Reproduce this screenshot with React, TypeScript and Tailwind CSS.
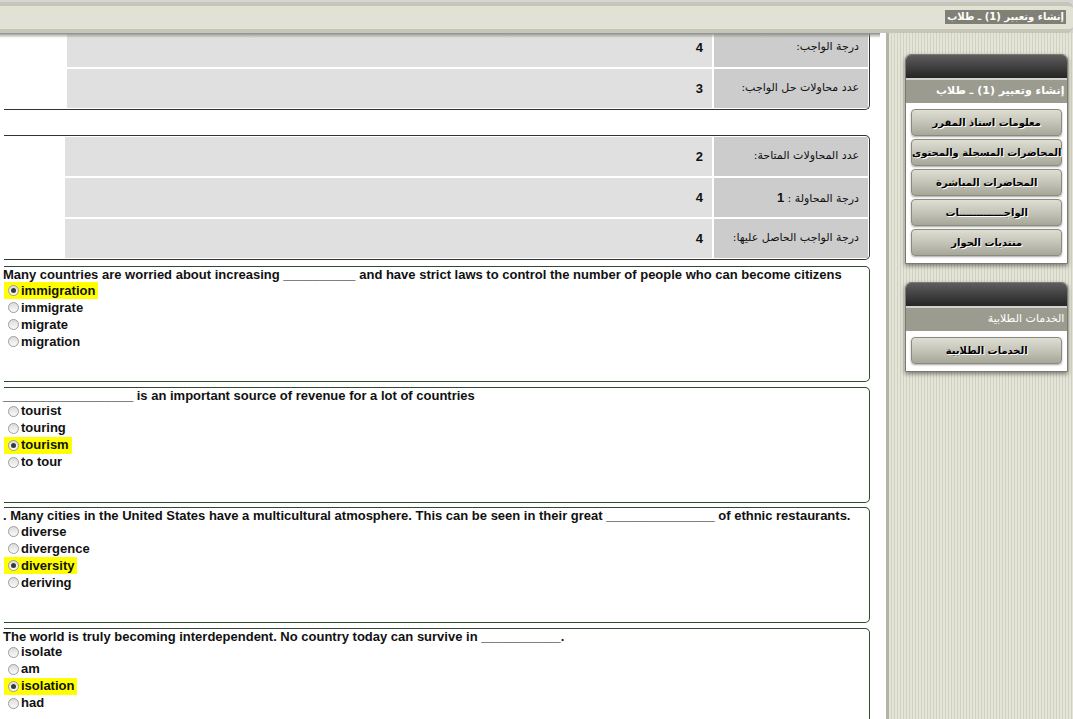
import React from "react";

type Option = { text: string; checked?: boolean };
type Question = { text: string; options: Option[] };

const QUESTIONS: Question[] = [
  {
    text: "Many countries are worried about increasing __________ and have strict laws to control the number of people who can become citizens",
    options: [{ text: "immigration", checked: true }, { text: "immigrate" }, { text: "migrate" }, { text: "migration" }],
  },
  {
    text: "__________________ is an important source of revenue for a lot of countries",
    options: [{ text: "tourist" }, { text: "touring" }, { text: "tourism", checked: true }, { text: "to tour" }],
  },
  {
    text: ". Many cities in the United States have a multicultural atmosphere. This can be seen in their great _______________ of ethnic restaurants.",
    options: [{ text: "diverse" }, { text: "divergence" }, { text: "diversity", checked: true }, { text: "deriving" }],
  },
  {
    text: "The world is truly becoming interdependent. No country today can survive in ___________.",
    options: [{ text: "isolate" }, { text: "am" }, { text: "isolation", checked: true }, { text: "had" }],
  },
];

const AR = "font-['DejaVu_Sans','Noto_Sans',sans-serif]";

// صف في جدول المعلومات
function InfoRow({ label, value, white = 59 }: { label: React.ReactNode; value: string; white?: number }) {
  return (
    <div className="flex h-[39px] gap-[2px]">
      <div className="bg-white" style={{ width: white }} />
      <div className="flex flex-1 items-center justify-end bg-[#e0e0e0] pr-[9px] text-[13px] font-bold text-[#111]">{value}</div>
      <div dir="rtl" className={`flex w-[154px] items-center bg-[#cccccc] pr-[9px] text-[11px] text-[#111] ${AR}`}>
        {label}
      </div>
    </div>
  );
}

function Radio({ checked }: { checked?: boolean }) {
  return (
    <span className="flex h-[11px] w-[11px] items-center justify-center rounded-full border border-[#9c9c9c] bg-gradient-to-b from-[#dcdcdc] to-[#fafafa]">
      {checked && <span className="h-[5px] w-[5px] rounded-full bg-[#3a3a3a]" />}
    </span>
  );
}

function QuestionBox({ q, first }: { q: Question; first?: boolean }) {
  return (
    <div className={`${first ? "mt-[6px]" : "mt-[4.5px]"} h-[116px] rounded-r-[5px] border border-l-0 border-[#2f4a2f]`}>
      <div className="-ml-[1px] whitespace-nowrap text-[13px] leading-[15px] font-bold text-[#111]">{q.text}</div>
      {q.options.map((o) => (
        <div key={o.text} className="flex h-[17px] items-center">
          <span className={`flex h-[17px] items-center gap-[2px] pl-[4px] pr-[3px] ${o.checked ? "bg-[#ffff00]" : ""}`}>
            <Radio checked={o.checked} />
            <span className="text-[13px] font-bold text-[#111]">{o.text}</span>
          </span>
        </div>
      ))}
    </div>
  );
}

function SideButton({ label }: { label: string }) {
  return (
    <div
      dir="rtl"
      className={`flex h-[27px] items-center justify-center whitespace-nowrap rounded-[4px] border border-[#8a8a7e] bg-gradient-to-b from-[#deded3] via-[#c4c4b8] to-[#a6a699] text-[10px] font-bold text-black shadow-[0_1px_2px_rgba(0,0,0,0.35)] [text-shadow:1px_1px_0_#fff] ${AR}`}
    >
      {label}
    </div>
  );
}

function SidePanel({ title, buttons, boldTitle = true }: { title: string; buttons: string[]; boldTitle?: boolean }) {
  return (
    <div className="overflow-hidden rounded-t-[6px] border border-[#7a7a70] bg-white shadow-[0_2px_4px_rgba(0,0,0,0.45)]">
      <div className="h-[23px] bg-gradient-to-b from-[#5e5e5e] to-[#262626]" />
      <div className="h-[2px] bg-[#d4d4cc]" />
      <div
        dir="rtl"
        className={`flex h-[23px] items-center bg-[#9b9b8f] pr-[3px] text-[11px] text-white ${boldTitle ? "font-bold" : ""} ${AR}`}
      >
        {title}
      </div>
      <div className="flex flex-col gap-[3px] px-[5px] pt-[6px] pb-[7px]">
        {buttons.map((b) => (
          <SideButton key={b} label={b} />
        ))}
      </div>
    </div>
  );
}

export default function App() {
  return (
    <div className="min-h-[719px] overflow-hidden bg-white font-['Liberation_Sans',Arial,sans-serif]">
      {/* الشريط العلوي */}
      <header className="relative z-10 h-[33px] bg-[#d6d6d6] pt-[2px]">
        <div className="flex h-[31px] items-start justify-end rounded-r-[6px] border-t-[4px] border-b-[4px] border-[#c6c6b6] bg-[#e1e1d5] pr-[7px] pt-[4px]">
          <div dir="rtl" className={`bg-[#808074] px-[2px] py-[1px] text-[10px] leading-[12px] font-bold text-white ${AR}`}>
            إنشاء وتعبير (1) ـ طلاب
          </div>
        </div>
        <div className="absolute left-0 top-[33px] h-[5px] w-[880px] bg-gradient-to-b from-[#8c8c8c] to-white/0" />
      </header>

      <div className="flex">
        {/* المحتوى */}
        <main className="-mt-[5px] ml-[4px] w-[866px] shrink-0">
          <div className="rounded-br-[5px] border-b border-r border-[#333] pr-px pb-px">
            <div className="flex flex-col gap-[2px]">
              <InfoRow label="درجة الواجب:" value="4" white={61} />
              <InfoRow label="عدد محاولات حل الواجب:" value="3" white={61} />
            </div>
          </div>

          <div className="mt-[25px] rounded-r-[5px] border border-l-0 border-[#333] py-px pr-px">
            <div className="flex flex-col gap-[2px]">
              <InfoRow label="عدد المحاولات المتاحة:" value="2" />
              <InfoRow
                label={
                  <span>
                    درجة المحاولة : <b className="font-['Liberation_Sans',sans-serif] text-[13px]">1</b>
                  </span>
                }
                value="4"
              />
              <InfoRow label="درجة الواجب الحاصل عليها:" value="4" />
            </div>
          </div>

          <div>
            {QUESTIONS.map((q, i) => (
              <QuestionBox key={q.text} q={q} first={i === 0} />
            ))}
          </div>
        </main>

        {/* الشريط الجانبي */}
        <aside className="ml-[16px] min-h-[690px] flex-1 border-l-[3px] border-[#b4b4a4] bg-[repeating-linear-gradient(90deg,#e4e4d8_0px,#e4e4d8_2px,#d1d1c2_2px,#d1d1c2_3px)] pl-[16px] pr-[11px] pt-[21px]">
          <SidePanel
            title="إنشاء وتعبير (1) ـ طلاب"
            buttons={["معلومات استاذ المقرر", "المحاضرات المسجلة والمحتوى", "المحاضرات المباشرة", "الواجـــــــــــــات", "منتديات الحوار"]}
          />
          <div className="mt-[18px]">
            <SidePanel title="الخدمات الطلابية" buttons={["الخدمات الطلابية"]} boldTitle={false} />
          </div>
        </aside>
      </div>
    </div>
  );
}
